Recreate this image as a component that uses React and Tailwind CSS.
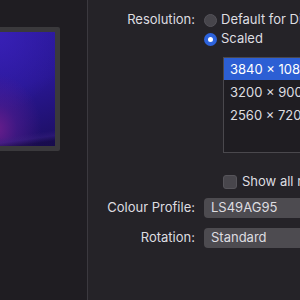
import React from 'react';

const font = { fontFamily: 'Inter, "Liberation Sans", sans-serif' };

function Radio({ checked }) {
    return checked ? (
        <span className="w-[13px] h-[13px] rounded-full bg-[#2d63dc] flex items-center justify-center shrink-0">
            <span className="w-[5px] h-[5px] rounded-full bg-white"></span>
        </span>
    ) : (
        <span className="block w-[13px] h-[13px] rounded-full bg-[#47454b] border border-[#55535a] shrink-0"></span>
    );
}

export default function App() {
    const modes = ['3840 × 1080', '3200 × 900', '2560 × 720'];

    return (
        <div className="w-[300px] h-[300px] flex overflow-hidden bg-[#252328] text-[13px] text-[#dedde0]" style={font}>
            {/* preview column */}
            <div className="w-[88px] shrink-0 bg-[#1f1d22] border-r border-[#3b393f] overflow-hidden flex justify-end pr-[27px] pt-[27px]">
                <div className="w-[140px] h-[124px] shrink-0 bg-[#3a393c] p-[5px] rounded-[2px]">
                    <div className="w-full h-full bg-[linear-gradient(172deg,transparent_88%,rgba(60,35,130,0.4)_92%,rgba(20,10,60,0.55)_96%),radial-gradient(ellipse_45px_55px_at_55%_85%,rgba(108,30,140,0.95)_0%,rgba(85,28,140,0.55)_45%,transparent_100%),radial-gradient(ellipse_70px_80px_at_55%_0%,#3820b6_0%,transparent_100%),linear-gradient(160deg,#2d1aa4_0%,#291794_55%,#1c0e60_100%)]"></div>
                </div>
            </div>

            {/* settings */}
            <div className="flex-1 min-w-0 flex flex-col pt-[13px] whitespace-nowrap">
                <div className="flex items-center h-[14px]">
                    <span className="w-[107px] text-right shrink-0">Resolution:</span>
                    <span className="ml-[9px] shrink-0"><Radio /></span>
                    <span className="ml-[4px]">Default for Display</span>
                </div>
                <div className="flex items-center h-[14px] mt-[5px]">
                    <span className="w-[107px] shrink-0"></span>
                    <span className="ml-[9px] shrink-0"><Radio checked /></span>
                    <span className="ml-[4px]">Scaled</span>
                </div>

                <div className="ml-[135px] mt-[11px] w-[180px] h-[96px] shrink-0 border border-[#4a484d] bg-[#1f1d22]">
                    {modes.map((m, i) => (
                        <div
                            key={m}
                            className={`h-[22px] flex items-center pl-[6px] pt-[2px] ${i === 0 ? 'bg-[#2c5fd4] text-white' : 'mt-[1px]'}`}
                        >
                            {m}
                        </div>
                    ))}
                </div>

                <div className="flex items-center ml-[135px] mt-[22px] h-[14px]">
                    <span className="block w-[14px] h-[14px] shrink-0 rounded-[3px] bg-[#48464c] border border-[#56545a]"></span>
                    <span className="ml-[5px]">Show all resolutions</span>
                </div>

                <div className="flex items-center mt-[9px] h-[20px]">
                    <span className="w-[107px] text-right shrink-0">Colour Profile:</span>
                    <span className="ml-[9px] w-[120px] h-[20px] rounded-[4px] bg-[#4d4b50] flex items-center pl-[7px] shrink-0">LS49AG95</span>
                </div>
                <div className="flex items-center mt-[10px] h-[20px]">
                    <span className="w-[107px] text-right shrink-0">Rotation:</span>
                    <span className="ml-[9px] w-[120px] h-[20px] rounded-[4px] bg-[#4d4b50] flex items-center pl-[7px] shrink-0">Standard</span>
                </div>
            </div>
        </div>
    );
}
